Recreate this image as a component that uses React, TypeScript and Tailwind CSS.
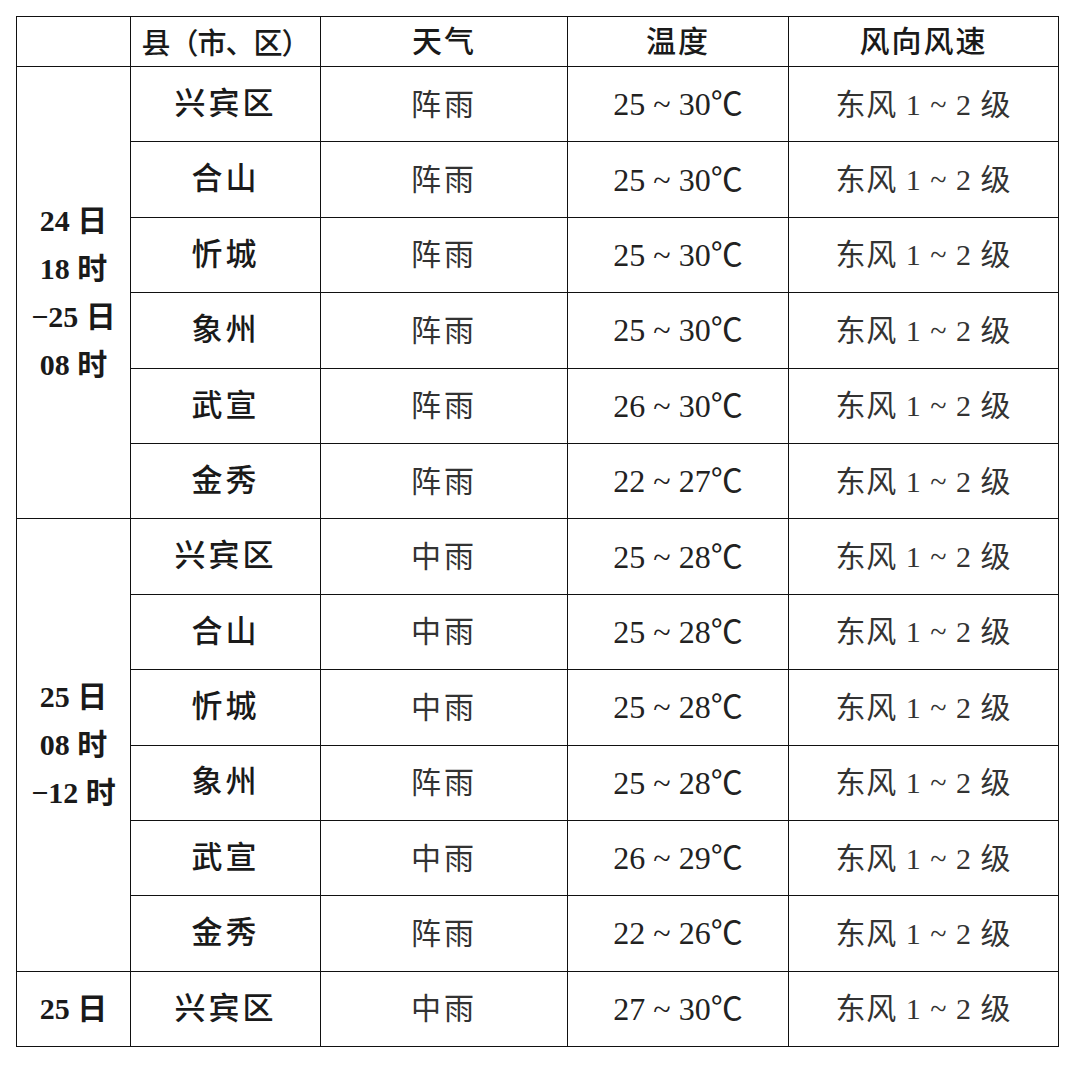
const serif = "font-['Liberation_Serif','Noto_Sans_CJK_SC',serif]";

type Row = { county: string; weather: string; temp: string };

const groups: { label: string[]; rows: Row[] }[] = [
  {
    label: ["24 日", "18 时", "−25 日", "08 时"],
    rows: [
      { county: "兴宾区", weather: "阵雨", temp: "25 ~ 30℃" },
      { county: "合山", weather: "阵雨", temp: "25 ~ 30℃" },
      { county: "忻城", weather: "阵雨", temp: "25 ~ 30℃" },
      { county: "象州", weather: "阵雨", temp: "25 ~ 30℃" },
      { county: "武宣", weather: "阵雨", temp: "26 ~ 30℃" },
      { county: "金秀", weather: "阵雨", temp: "22 ~ 27℃" },
    ],
  },
  {
    label: ["25 日", "08 时", "−12 时"],
    rows: [
      { county: "兴宾区", weather: "中雨", temp: "25 ~ 28℃" },
      { county: "合山", weather: "中雨", temp: "25 ~ 28℃" },
      { county: "忻城", weather: "中雨", temp: "25 ~ 28℃" },
      { county: "象州", weather: "阵雨", temp: "25 ~ 28℃" },
      { county: "武宣", weather: "中雨", temp: "26 ~ 29℃" },
      { county: "金秀", weather: "阵雨", temp: "22 ~ 26℃" },
    ],
  },
  {
    label: ["25 日"],
    rows: [{ county: "兴宾区", weather: "中雨", temp: "27 ~ 30℃" }],
  },
];

const cell = "border-[1.5px] border-[#111] text-center align-middle p-0";

export default function App() {
  return (
    <div className="w-[1080px] h-[1066px] bg-white pt-[16px] pl-[16px]">
      <table className={`w-[1042px] table-fixed border-collapse ${serif} text-[#1a1a1a]`}>
        <colgroup>
          <col className="w-[114px]" />
          <col className="w-[190px]" />
          <col className="w-[247px]" />
          <col className="w-[221px]" />
          <col className="w-[270px]" />
        </colgroup>
        <thead>
          <tr className="h-[50px]">
            <th className={cell}></th>
            <th className={`${cell} text-[29px] font-medium tracking-[-1px] font-['Noto_Sans_CJK_SC',sans-serif]`}>
              县（市、区）
            </th>
            <th className={`${cell} text-[30px] font-medium tracking-[2px]`}>天气</th>
            <th className={`${cell} text-[30px] font-medium tracking-[2px]`}>温度</th>
            <th className={`${cell} text-[30px] font-medium tracking-[2px]`}>风向风速</th>
          </tr>
        </thead>
        <tbody>
          {groups.map((g, gi) =>
            g.rows.map((r, ri) => (
              <tr key={`${gi}-${ri}`} className="h-[75.4px]">
                {ri === 0 && (
                  <td rowSpan={g.rows.length} className={`${cell} text-[30px] font-semibold leading-[48px]`}>
                    {g.label.map((l) => (
                      <div key={l}>{l}</div>
                    ))}
                  </td>
                )}
                <td className={`${cell} text-[31px] font-medium tracking-[3px]`}>{r.county}</td>
                <td className={`${cell} text-[30px] text-[#333] tracking-[3px]`}>{r.weather}</td>
                <td className={`${cell} text-[32px] text-[#222]`}>{r.temp}</td>
                <td className={`${cell} text-[30px] text-[#333] tracking-[1px]`}>东风 1 ~ 2 级</td>
              </tr>
            ))
          )}
        </tbody>
      </table>
    </div>
  );
}
